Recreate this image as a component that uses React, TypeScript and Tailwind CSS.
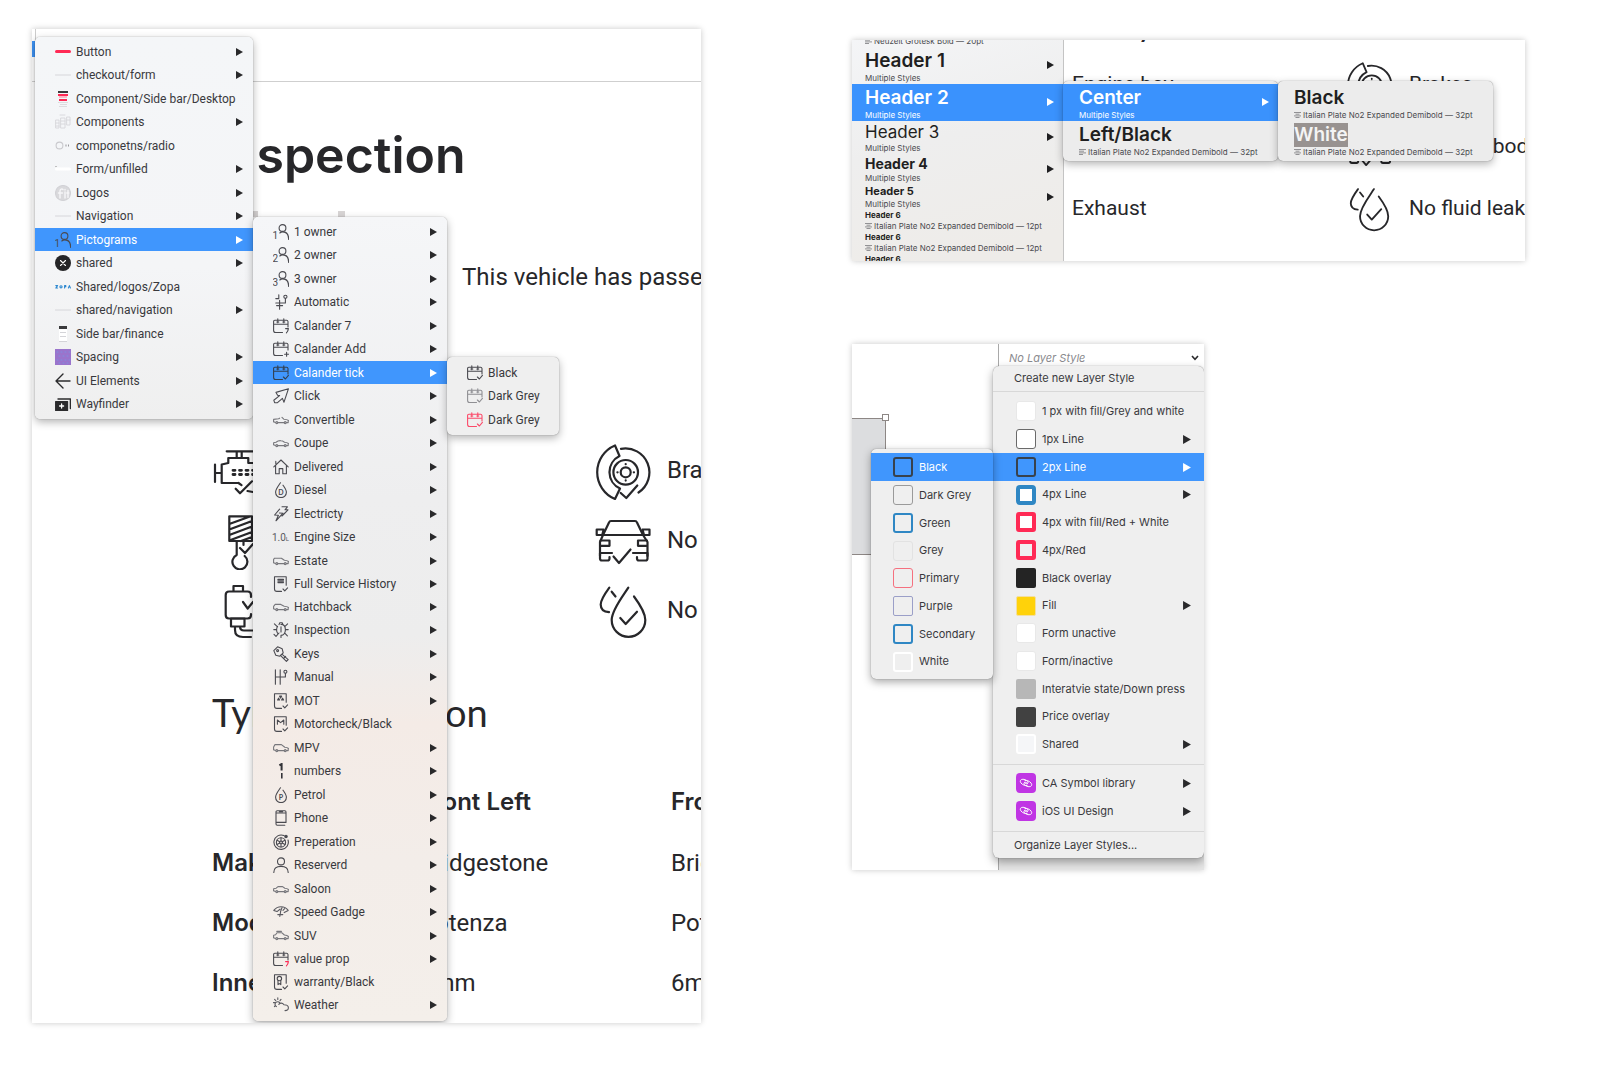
import React from "react";
import type { ReactNode } from "react";

const RED = "#ff2a55";

type Item = {
  label: string;
  icon?: ReactNode;
  arrow?: boolean;
  active?: boolean;
  sub?: ReactNode;
};

/* ---------- small 16px pictograms ---------- */

function Glyph({ children, color = "#4a4a50" }: { children: ReactNode; color?: string }) {
  return (
    <svg
      aria-hidden="true"
      viewBox="0 0 16 16"
      className="size-4 shrink-0"
      fill="none"
      stroke={color}
      strokeWidth="1.1"
      strokeLinecap="round"
      strokeLinejoin="round"
    >
      {children}
    </svg>
  );
}

function Owner({ n }: { n: string }) {
  return (
    <Glyph>
      <circle cx="9.5" cy="4" r="3.4" />
      <path d="M6.800 9C7.600 8.300 8.600 7.900 9.800 7.900c3.700 0 5.900 2.600 5.900 7.500" />
      <text x="-0.5" y="15" fontSize="10" fontFamily="Roboto, sans-serif" fill="#4a4a50" stroke="none">
        {n}
      </text>
    </Glyph>
  );
}

function Calendar({ mark, color, markColor }: { mark: "7" | "+" | "tick"; color?: string; markColor?: string }) {
  return (
    <Glyph color={color}>
      <path d="M9.500 14.500H2.600a2 2 0 0 1-2-2V3.500a1.200 1.200 0 0 1 1.200-1.200h11.800a1.400 1.400 0 0 1 1.400 1.200V9M.6 6.200H15M4.800.8v4M10.800.8v4M3.800 4h2M9.800 4h2" />
      {mark === "7" && <path stroke={markColor} d="M12.600 10.600h2.800c-.2 2-.8 3-2 4.200" />}
      {mark === "+" && <path d="M13.600 11.200v4M11.600 13.200h4" />}
      {mark === "tick" && <path d="M10.400 12l2 2 3-3.600" />}
    </Glyph>
  );
}

function Car({ roof }: { roof: string }) {
  return (
    <Glyph color="#77777c">
      <path d={roof} />
      <path d="M5 10.600h6M.6 9.800l1.800.8M13.400 10.600h1.800V8.600" />
      <circle cx="3.800" cy="10.600" r="1" />
      <circle cx="12.200" cy="10.600" r="1" />
    </Glyph>
  );
}

function Drop({ letter }: { letter: string }) {
  return (
    <Glyph>
      <path d="M7.500.8C5 4.500 2.600 7.200 2.600 10.200a5.300 5.300 0 0 0 10.800 0c0-2.300-1.600-4.400-3.400-7" />
      <text x="8" y="12.800" textAnchor="middle" fontSize="7" fontWeight="700" fontFamily="Lato, sans-serif" fill="#4a4a50" stroke="none">
        {letter}
      </text>
    </Glyph>
  );
}

function Sheet({ children }: { children: ReactNode }) {
  return (
    <Glyph>
      <path d="M8.500 15.400H4a2.500 2.500 0 0 1-2.500-2.500V.7h11.700v8.600M10 13l1.800 1.800 2.800-3" />
      {children}
    </Glyph>
  );
}

const hair = (
  <Glyph color="#d6d6da">
    <path d="M.5 8h15" strokeWidth="1" />
  </Glyph>
);

/* ---------- menu parts ---------- */

function Arrow({ big }: { big?: boolean }) {
  return (
    <svg aria-hidden="true" viewBox="0 0 7 8" className={big ? "ml-auto h-[9px] w-2 shrink-0" : "ml-auto h-2 w-[7px] shrink-0"}>
      <path d="M0 0l7 4-7 4z" fill="currentColor" />
    </svg>
  );
}

function Menu({ items, label, className }: { items: Item[]; label: string; className: string }) {
  return (
    <ul
      role="menu"
      aria-label={label}
      className={"absolute z-10 rounded-[5px] shadow-[0_3px_8px_rgba(0,0,0,0.3),0_0_1px_rgba(0,0,0,0.5)] " + className}
    >
      {items.map((it, i) => (
        <li key={i} role="none" className="relative h-[23px] even:h-6 nth-[16n]:h-[23px]">
          <button
            role="menuitem"
            className={
              "flex h-full w-full items-center gap-[5px] pr-[10px] pl-5 text-left font-['Roboto'] text-[12px] whitespace-nowrap " +
              (it.active ? "bg-[#4096fd] text-white" : "text-[#39393d]")
            }
          >
            {it.icon}
            {it.label}
            {it.arrow && (
              <span className={it.active ? "ml-auto text-white" : "ml-auto text-[#29292b]"}>
                <Arrow />
              </span>
            )}
          </button>
          {it.sub}
        </li>
      ))}
    </ul>
  );
}

const tickItems: Item[] = [
  { label: "Black", icon: <Calendar mark="tick" /> },
  { label: "Dark Grey", icon: <Calendar mark="tick" color="#8f8f93" /> },
  { label: "Dark Grey", icon: <Calendar mark="tick" color="#fb4a69" /> },
];

const pictograms: Item[] = [
  { label: "1 owner", icon: <Owner n="1" />, arrow: true },
  { label: "2 owner", icon: <Owner n="2" />, arrow: true },
  { label: "3 owner", icon: <Owner n="3" />, arrow: true },
  {
    label: "Automatic",
    icon: (
      <Glyph>
        <path d="M5.800.8v3.600M2.800 4.600h3M2.800 9h9.600V4.600M6.600 6.400v8.800M3.600 11.600h6" />
        <circle cx="12.400" cy="2.800" r="1.600" />
      </Glyph>
    ),
    arrow: true,
  },
  { label: "Calander 7", icon: <Calendar mark="7" />, arrow: true },
  { label: "Calander Add", icon: <Calendar mark="+" />, arrow: true },
  {
    label: "Calander tick",
    icon: <Calendar mark="tick" color="#33404f" />,
    arrow: true,
    active: true,
    sub: <Menu label="Calander tick" items={tickItems} className="-top-1 left-full w-28 bg-[#efefef] py-1" />,
  },
  {
    label: "Click",
    icon: (
      <Glyph>
        <path d="M15.400.8L3 4.400l1.600 2.800 2 .4L.8 12.200l.8 2.400 2.600.2 5.200-4.400 1.600 3.800z" />
      </Glyph>
    ),
    arrow: true,
  },
  { label: "Convertible", icon: <Car roof="M.6 9.800V7.400l5-.6 1-.6M9 5.400l1.800 1.800c2 .1 3.600.4 4.600 1.200" />, arrow: true },
  { label: "Coupe", icon: <Car roof="M.6 9.600V7.800l2.400-.6c1.600-1.300 3-1.700 4.700-1.600 1.400 0 2.800.8 3.800 1.600 1.800.1 3 .5 3.800 1.200" />, arrow: true },
  {
    label: "Delivered",
    icon: (
      <Glyph>
        <path d="M.8 7.800L8 1l7.200 6.800M2.600 6.400v8.400h3.600V9.600h3.600v5.200h3.600V6.400M2.800 4.600V2.400" />
      </Glyph>
    ),
    arrow: true,
  },
  { label: "Diesel", icon: <Drop letter="D" />, arrow: true },
  {
    label: "Electricty",
    icon: (
      <Glyph>
        <path d="M6.600 3.200L1.600 9l3.800.2L3 14.800l7-7.600-3.600-.2M9 .8h5.400l-2.400 3h3L9 10" />
      </Glyph>
    ),
    arrow: true,
  },
  {
    label: "Engine Size",
    icon: (
      <svg aria-hidden="true" viewBox="0 0 16 16" className="size-4 shrink-0 overflow-visible">
        <text x="-1" y="12" fontSize="10" fontFamily="Roboto, sans-serif" fill="#5a5a60">
          1.0
        </text>
        <text x="12.800" y="12" fontSize="6" fontFamily="Roboto, sans-serif" fill="#5a5a60">
          L
        </text>
      </svg>
    ),
    arrow: true,
  },
  { label: "Estate", icon: <Car roof="M.6 9.600V6.400l1-1.200h6.800l3 2c2 .1 3.200.5 4 1.200" />, arrow: true },
  {
    label: "Full Service History",
    icon: (
      <Sheet>
        <path d="M5 3.400h5.400M5 5h5.400M5 6.600h5.400" strokeWidth="1.400" />
      </Sheet>
    ),
    arrow: true,
  },
  { label: "Hatchback", icon: <Car roof="M.6 9.600V7.400l1.600-2h5.600l3.400 1.800c2 .1 3.400.5 4.200 1.200" />, arrow: true },
  {
    label: "Inspection",
    icon: (
      <Glyph>
        <path d="M8 2.400c3 0 4.400 2.400 4.400 5.400s-1.600 5.600-4.400 5.600M4.600 4.400C3.800 5.400 3.600 6.600 3.600 8s.4 2.200 1 3.200M8 4.800V10M6 2.600L6.800.8h2.400L10 2.600M3.600 7.600H.8M12.400 7.600h2.800M12 4.400l2.600-2.600M4 4.400L1.400 1.800M12 11.400l2.400 2.400M1 12.400l2 2 3-3.400M8 13.400v2" />
      </Glyph>
    ),
    arrow: true,
  },
  {
    label: "Keys",
    icon: (
      <Glyph>
        <path d="M.8 4.600L4.600.8l4.600 2 1 4-3.400 3.400-4-1zM9.200 8.400l6 5.200-1.800 1.800-6-6M11 12l1.600-1.600" />
        <circle cx="4.600" cy="4.600" r="1" />
      </Glyph>
    ),
    arrow: true,
  },
  {
    label: "Manual",
    icon: (
      <Glyph>
        <path d="M2.400.8v14.400M7.200.8v14.400M2.400 8h10V4.400" />
        <circle cx="12.400" cy="2.800" r="1.500" />
      </Glyph>
    ),
    arrow: true,
  },
  {
    label: "MOT",
    icon: (
      <Sheet>
        <path d="M6.600 3.200h2L7.600 5zM4.600 7h2l-1-1.800zM8.600 7h2l-1-1.800z" strokeWidth="1.200" />
      </Sheet>
    ),
    arrow: true,
  },
  {
    label: "Motorcheck/Black",
    icon: (
      <Sheet>
        <path d="M4.400 8.200V4l3.200 2.600L10.800 4v4.200" />
      </Sheet>
    ),
  },
  { label: "MPV", icon: <Car roof="M.6 9.600V7l1.400-2.400h6.400l3.400 2.600c1.800.1 3 .5 3.600 1.200" />, arrow: true },
  {
    label: "numbers",
    icon: (
      <svg aria-hidden="true" viewBox="0 0 16 16" className="size-4 shrink-0" fill="none" stroke="#333338">
        <path d="M6.400 2.400L8.600 1v6.400" strokeWidth="2" />
        <path d="M8.800 10v5.600" strokeWidth="1.600" />
      </svg>
    ),
    arrow: true,
  },
  { label: "Petrol", icon: <Drop letter="P" />, arrow: true },
  {
    label: "Phone",
    icon: (
      <Glyph>
        <path d="M3 12.400V2a1.200 1.200 0 0 1 1.200-1.200h7.600A1.200 1.200 0 0 1 13 2v10.400zM3 3h10M6.400 1.800h3.200M3 12.400v1.600a1.200 1.200 0 0 0 1.200 1.200h7.600" />
      </Glyph>
    ),
    arrow: true,
  },
  {
    label: "Preperation",
    icon: (
      <Glyph>
        <path d="M11 1.600A7.200 7.200 0 1 0 15 6" />
        <circle cx="8" cy="8.400" r="4.600" />
        <circle cx="8" cy="8.400" r="1.400" />
        <path d="M8 3.800V7M8 9.800V13M4 6.200l2.800 1.500M12 6.200L9.200 7.700M4 10.600l2.800-1.500M12 10.600L9.200 9.100" />
        <circle cx="13" cy="2.400" r="1.200" fill="#4a4a50" />
      </Glyph>
    ),
    arrow: true,
  },
  {
    label: "Reserverd",
    icon: (
      <Glyph>
        <circle cx="8" cy="4.400" r="3.500" />
        <path d="M.8 15.400c0-4 2.800-6 7.200-6s7.200 2 7.200 6" />
      </Glyph>
    ),
    arrow: true,
  },
  { label: "Saloon", icon: <Car roof="M.6 9.600V7.800l2.600-.6L5 5.600h4.600l2.200 1.600c1.600.1 2.800.5 3.600 1.200" />, arrow: true },
  {
    label: "Speed Gadge",
    icon: (
      <Glyph color="#5a5a60">
        <path d="M.8 6.400C3 3.600 5.600 2.800 8 2.800s5.400 1 7.200 3.600l-4 2.200M.8 6.400L4 7.600l3-2.400M9.200 3L7.400 8M4.800 10.600h5M7.600 8l-.8 4.400M10 6.400l1.600-1.800" />
      </Glyph>
    ),
    arrow: true,
  },
  { label: "SUV", icon: <Car roof="M.6 9.600V7.200l2-.4L4 4.800h5l2.400 2.200c1.800.1 3.200.5 4 1.400M3.800 3.400h4.600" />, arrow: true },
  { label: "value prop", icon: <Calendar mark="7" markColor={RED} />, arrow: true },
  {
    label: "warranty/Black",
    icon: (
      <Sheet>
        <circle cx="6.400" cy="4.600" r="2.200" />
        <path d="M5 6.600v4l1.400-1 1.400 1v-4" />
      </Sheet>
    ),
  },
  {
    label: "Weather",
    icon: (
      <Glyph color="#5a5a60">
        <path d="M7 6.200a2.600 2.600 0 1 0-3.600 3.400M4.800.8v1.600M.4 5.600H2M1.600 2.400l1.200 1.200M8 2.400L7 3.600M1.400 9.600l1-1.200M5.800 7.400c1-1.600 3.600-2 5.200.4 2.400 0 4.400 1 4.400 3s-1.200 2.800-3.400 2.800" />
      </Glyph>
    ),
    arrow: true,
  },
];

const symbols: Item[] = [
  { label: "Button", icon: <Glyph color={RED}><path d="M1.500 7.500h13" strokeWidth="3" /></Glyph>, arrow: true },
  { label: "checkout/form", icon: hair, arrow: true },
  {
    label: "Component/Side bar/Desktop",
    icon: (
      <Glyph>
        <g stroke="none">
          <path fill="#3a3a3c" d="M3 0h10v2H3z" />
          <path fill={RED} d="M3 3h10v2H3zM4 8h8v2H4z" />
          <path fill="#fbb9c5" d="M4 5h8v2H4z" />
          <path fill="#dcdcdf" d="M3 11h10v1H3zM5 13h7v1H5zM4 15h8v1H4z" />
        </g>
      </Glyph>
    ),
  },
  {
    label: "Components",
    icon: (
      <Glyph color="#d6d6da">
        <path d="M5 1h5M1 6h3v8H1zM6 4h4v10H6zM12 3h3v8h-3zM1 9h3M1 12h3M6 7h4M6 10h4M12 6h3" strokeWidth="0.9" />
      </Glyph>
    ),
    arrow: true,
  },
  {
    label: "componetns/radio",
    icon: (
      <Glyph color="#c9c9cd">
        <circle cx="4.500" cy="7.500" r="3.400" />
        <path d="M10.500 7.500h4" strokeWidth="2" strokeDasharray="1 1.500" strokeLinecap="butt" stroke="#98989c" />
      </Glyph>
    ),
  },
  { label: "Form/unfilled", icon: <Glyph color="#ffffff"><path d="M1.500 8h13" strokeWidth="3" /><path d="M.5 5.500h1" stroke="#bbb" /></Glyph>, arrow: true },
  {
    label: "Logos",
    icon: (
      <Glyph color="#d2d2d6">
        <circle cx="8" cy="8" r="7.500" fill="#d9d9dc" />
        <path d="M5 13V6c0-2 2-2.500 3-1.500M3.500 8h4M10 7v6M10 4.500V5M13 5.500v7M11.800 8h2" stroke="#f6f6f8" strokeWidth="1.400" />
      </Glyph>
    ),
    arrow: true,
  },
  { label: "Navigation", icon: hair, arrow: true },
  {
    label: "Pictograms",
    icon: <Owner n="1" />,
    arrow: true,
    active: true,
    sub: (
      <Menu
        label="Pictograms"
        items={pictograms}
        className="-top-[11px] left-full w-[194px] bg-[linear-gradient(180deg,#f5f6f8_0%,#eeeeef_35%,#ededed_52%,#f4ebe6_63%,#f3ede9_80%,#f4efea_100%)] pt-[3px] pb-1"
      />
    ),
  },
  {
    label: "shared",
    icon: (
      <Glyph color="#ffffff">
        <circle cx="8" cy="8" r="8" fill="#252527" stroke="none" />
        <path d="M5.500 5.500l5 5M10.500 5.500l-5 5" />
      </Glyph>
    ),
    arrow: true,
  },
  {
    label: "Shared/logos/Zopa",
    icon: (
      <Glyph color="#2d88d0">
        <path d="M.8 6.600h1.800L.8 9h1.800M9.600 9V6.600h1.200v1.200H9.600M13.400 9l1-2.400 1 2.400" />
        <circle cx="6" cy="7.800" r="1.100" />
      </Glyph>
    ),
  },
  { label: "shared/navigation", icon: hair, arrow: true },
  {
    label: "Side bar/finance",
    icon: (
      <Glyph>
        <g stroke="none">
          <path fill="#ffffff" d="M4 3h8v13H4z" />
          <path fill="#3a3a3c" d="M4 0h8v3H4z" />
          <path fill="#d4d4d8" d="M5 6h6v1H5zM5 10h6v1H5zM4 15h8v1H4z" />
        </g>
      </Glyph>
    ),
  },
  {
    label: "Spacing",
    icon: (
      <Glyph>
        <path fill="#9a74cc" stroke="none" d="M0 0h16v16H0z" />
        <path stroke="#7f8fe0" strokeWidth="1" strokeDasharray="1 3" d="M2 3h13M4 7h11M2 11h13M4 14h11" />
      </Glyph>
    ),
    arrow: true,
  },
  { label: "UI Elements", icon: <Glyph color="#2b2b2d"><path d="M15 8H1M8 1L1 8l7 7" strokeWidth="1.400" /></Glyph>, arrow: true },
  {
    label: "Wayfinder",
    icon: (
      <Glyph color="#2b2b2d">
        <path fill="#2b2b2d" d="M.6 5.600h12v8.800H.6z" />
        <path d="M3 3h12.400v9.600" strokeWidth="1.400" />
        <path stroke="#fff" d="M6.600 8v4M4.600 10h4" strokeWidth="1.300" />
      </Glyph>
    ),
    arrow: true,
  },
];

/* ---------- large inspection pictograms ---------- */

function Picto({ children, small }: { children: ReactNode; small?: boolean }) {
  return (
    <svg
      aria-hidden="true"
      viewBox="0 0 56 56"
      className={small ? "size-[47px] shrink-0" : "size-14 shrink-0"}
      fill="none"
      stroke="#27272a"
      strokeWidth="2.200"
      strokeLinecap="round"
      strokeLinejoin="round"
    >
      {children}
    </svg>
  );
}

const brakes = (
  <>
    <path d="M20 1.500L24.500 12A18 18 0 0 0 25 44.500L20 55A29 29 0 0 1 20 1.500Z" />
    <path d="M26 4.800A24 24 0 0 1 43.500 48.500" />
    <circle cx="30.700" cy="28.300" r="12.300" />
    <circle cx="30.700" cy="28.300" r="5" />
    <path d="M30.700 20v.2M30.700 36.400v.2M22.400 28.300h.2M38.800 28.300h.2" />
    <path d="M25.700 49l5.600 5 11-12.500" />
  </>
);
const car = (
  <>
    <path d="M8 21l6-12.500q.5-1.500 2-1.500h24q1.500 0 2 1.500L48 21M8 21h40M8 21l-3 7v14M48 21l4.500 7v14" />
    <path d="M1.700 15.500h7l-1.500 5.500H1.700zM47.500 15.500h7V21h-5.500z" />
    <path d="M5.500 26.500h9v5.300h-9M52 26.500h-9v5.300h9" />
    <path d="M5 39h12M5 39v5.500q0 2 2 2h5.500q2 0 2-2V43M52.500 39H38M52.500 39v5.500q0 2-2 2H44q-2 0-2-2V43" />
    <path d="M18.500 42.500l5.500 6.500 11.500-13.500" />
  </>
);
const drops = (
  <>
    <path d="M33.300 3.700C28 12 16.700 26 16.700 36a16.800 16.800 0 0 0 33.600 0c0-6-5-15-11.300-23.500" />
    <path d="M14.300 3.700C9 11 5.700 16 5.700 20.500c0 4.500 3.300 7.300 8.300 7.700M16.700 7.700l3.800 4.800" />
    <path d="M25.300 34l5.400 6L42 27.700" />
  </>
);
const engine = (
  <>
    <path d="M2 20.500V38M2 29h6.700M25.500 39H8.700V20.500l6.600-1.500V14h20v5H44M13.700 7.300h28M23.700 8v6M28.700 8v6M22.700 44.700l4.300 4.600 12-12M25.500 39l3 2.200M34.500 47l8 1.500" />
    <path d="M20 26.300h20M20 30.500h20" strokeDasharray="2 4.500" strokeWidth="2.800" />
  </>
);
const piston = (
  <>
    <path d="M16.300 2.300H39V27H16.300zM16.300 10L37 2.500M16.300 15.500L39 7M16.300 21L39 12.500M16.300 26.500L39 18M28 27l11-4" />
    <path d="M23.700 28v13a7.500 7.500 0 1 0 8 1M30.500 28v3M27 34l5 5 8-9" />
  </>
);
const gearbox = (
  <>
    <path d="M20.500 7.500V2h9.500v5.500M38 13v-2q0-3.500-3.500-3.500H16q-3.300 0-3.300 3.500v20q0 3.500 3.300 3.500h18.500q3.500 0 3.500-3.500v-1" />
    <path d="M18 34.500h13.500v8H18zM22 42.500V46q0 7 8 7h8M27 42.500q0 4 4 4h9M30 18l4.700 6.500L40 18" />
  </>
);

/* ---------- boards ---------- */

const board = "relative overflow-hidden bg-white shadow-[0_0_6px_rgba(0,0,0,0.22)] ";

function InspectionBoard() {
  const tyreRows = [
    ["Make", "Bridgestone", "Bridgestone"],
    ["Model", "Potenza", "Potenza"],
    ["Inner", "6mm", "6mm"],
  ];
  const checks: [ReactNode, ReactNode, string][] = [
    [engine, brakes, "Brakes"],
    [piston, car, "No rusty bodywork"],
    [gearbox, drops, "No fluid leaks"],
  ];
  return (
    <section className={board + "whitespace-nowrap text-[#27272a]"}>
      <div className="h-[53px] border-b border-[#cfcfcf]">
        <div className="h-full w-1 border-r border-[#cccccc] pt-3">
          <div className="h-4 w-[3px] bg-[#3d93f5]" />
        </div>
      </div>
      <div className="pb-[10px] pl-[180px]">
        <h1 className="mt-10 h-[66px] text-[50px] leading-[66px] font-semibold">Inspection</h1>
        <div className="mt-[23px] flex gap-20 pl-10">
          <span className="h-[6px] w-[6px] bg-[#d8d5d5]" />
          <span className="h-[6px] w-[7px] bg-[#d8d5d5]" />
        </div>
        <p className="mt-11 pl-[250px] font-['Roboto'] text-2xl">This vehicle has passed</p>
        <ul className="mt-36 pl-px font-['Roboto'] text-2xl">
          {checks.map(([left, right, text], i) => (
            <li key={i} className="grid h-[70px] grid-cols-[382px_72px_1fr] items-center">
              <Picto>{left}</Picto>
              <Picto>{right}</Picto>
              <span className="pb-[5px]">{text}</span>
            </li>
          ))}
        </ul>
        <h2 className="mt-[42px] font-['Lato'] text-[38px] leading-[46px]">Tyre information</h2>
        <table className="mt-[35px] w-full table-fixed text-left text-2xl">
          <colgroup>
            <col className="w-[208px]" />
            <col className="w-[251px]" />
            <col />
          </colgroup>
          <thead>
            <tr className="h-[63px]">
              <td />
              <th className="font-semibold">Front Left</th>
              <th className="font-semibold">Front Right</th>
            </tr>
          </thead>
          <tbody>
            {tyreRows.map(([name, a, b]) => (
              <tr key={name} className="h-[60px] font-['Roboto']">
                <th className="font-['Inter'] text-2xl font-semibold">{name}</th>
                <td>{a}</td>
                <td>{b}</td>
              </tr>
            ))}
          </tbody>
        </table>
      </div>
      <Menu
        label="Symbols"
        items={symbols}
        className="top-2 left-[3px] w-[218px] bg-[linear-gradient(180deg,#f4f6f8,#f4f5f7_60%,#efefef)] pt-[3px] pb-1"
      />
    </section>
  );
}

function AlignMark({ center }: { center?: boolean }) {
  return (
    <svg aria-hidden="true" viewBox="0 0 7 6" className="h-[6px] w-[7px] shrink-0" stroke="#7a7a7e" strokeWidth="0.8">
      <path d={center ? "M0 .5h7M1.500 2.200h4M0 3.900h7M1.500 5.500h4" : "M0 .5h7M0 2.200h5M0 3.900h7M0 5.500h4"} />
    </svg>
  );
}

type StyleItem = { name: string; note: string; size: string; mark?: "left" | "center"; arrow?: boolean; active?: boolean; selected?: boolean };

function StyleRow({ item }: { item: StyleItem }) {
  return (
    <button
      role="menuitem"
      className={
        "flex w-full items-center pr-[9px] pb-px text-left whitespace-nowrap " +
        (item.active ? "bg-[#3a92fd] text-white" : "text-[#1f1f21]")
      }
    >
      <span>
        <span className={"block " + item.size}>
          <span className={item.selected ? "inline-block bg-[#989290] text-[#f4f4f4]" : ""}>{item.name}</span>
        </span>
        <span className={"flex items-center gap-[2px] text-[8px] leading-[10px] " + (item.active ? "text-white" : "text-[#4a4a4e]")}>
          {item.mark && <AlignMark center={item.mark === "center"} />}
          {item.note}
        </span>
      </span>
      {item.arrow && <Arrow />}
    </button>
  );
}

const big = "pt-0.5 text-[19px] leading-6 font-semibold";
const tiny = "text-[8px] leading-[11px] font-bold";
const plate = (pt: number) => `Italian Plate No2 Expanded Demibold — ${pt}pt`;
const ms = "Multiple Styles";

const headers: StyleItem[] = [
  { name: "Header 1", note: ms, size: big, arrow: true },
  { name: "Header 2", note: ms, size: big, arrow: true, active: true },
  { name: "Header 3", note: ms, size: "text-[17px] leading-[22px]", arrow: true },
  { name: "Header 4", note: ms, size: "text-[14px] leading-[19px] font-bold", arrow: true },
  { name: "Header 5", note: ms, size: "text-[11px] leading-[15px] font-bold", arrow: true },
  { name: "Header 6", note: plate(12), size: tiny, mark: "center" },
  { name: "Header 6", note: plate(12), size: tiny, mark: "center" },
  { name: "Header 6", note: plate(12), size: tiny, mark: "center" },
];

function HeaderBoard() {
  const rows: [string, ReactNode, string][] = [
    ["Engine bay", brakes, "Brakes"],
    ["Gearbox", car, "No rusty bodywork"],
    ["Exhaust", drops, "No fluid leaks"],
  ];
  const pop =
    "absolute top-[41px] rounded-[5px] bg-[#ececec] py-[3px] shadow-[0_3px_8px_rgba(0,0,0,0.3),0_0_1px_rgba(0,0,0,0.5)] ";
  return (
    <section className={board + "flex h-[221px] items-start"}>
      <div role="menu" aria-label="Text styles" className="-mt-[19px] w-[212px] shrink-0 border-r border-[#c4c4c4] bg-[linear-gradient(165deg,#f5f6f8,#eeeeee_45%,#eeece9_85%)] *:pl-[13px]">
        <StyleRow item={{ name: "Header", note: "Neuzeit Grotesk Bold — 20pt", size: "text-[12px] leading-[15px]", mark: "left" }} />
        {headers.map((h, i) => (
          <StyleRow key={i} item={h} />
        ))}
      </div>
      <div className="min-w-0 flex-1 pl-2 font-['Roboto'] text-[21px] whitespace-nowrap text-[#27272a]">
        <h2 className="-mt-[27px] mb-[9px] font-['Lato'] text-2xl leading-8 font-bold">History</h2>
        {rows.map(([a, icon, b]) => (
          <div key={a} className="grid h-[62px] grid-cols-[274px_63px_1fr] items-center">
            <span>{a}</span>
            <Picto small>{icon}</Picto>
            <span>{b}</span>
          </div>
        ))}
      </div>
      <div role="menu" aria-label="Header 2" className={pop + "left-[211px] w-[215px] *:pl-4"}>
        <StyleRow item={{ name: "Center", note: ms, size: big, arrow: true, active: true }} />
        <StyleRow item={{ name: "Left/Black", note: plate(32), size: big, mark: "left" }} />
      </div>
      <div role="menu" aria-label="Center" className={pop + "left-[426px] w-[215px] *:pl-4"}>
        <StyleRow item={{ name: "Black", note: plate(32), size: big, mark: "center" }} />
        <StyleRow item={{ name: "White", note: plate(32), size: big, mark: "center", selected: true }} />
      </div>
    </section>
  );
}

type Swatch = { label: string; box: string; arrow?: boolean; active?: boolean; link?: boolean };

const lines: Swatch[] = [
  { label: "Black", box: "border-2 border-[#38424d] rounded-[3px]", active: true },
  { label: "Dark Grey", box: "border border-[#9a9a9a] rounded-[3px]" },
  { label: "Green", box: "border-2 border-[#2f87c4] rounded-[3px]" },
  { label: "Grey", box: "border border-[#e2e2e2] rounded-[3px]" },
  { label: "Primary", box: "border border-[#f5707f] rounded-[3px]" },
  { label: "Purple", box: "border border-[#9b9fc8] rounded-[2px]" },
  { label: "Secondary", box: "border-2 border-[#2f87c4] rounded-[3px]" },
  { label: "White", box: "border-2 border-white rounded-[3px]" },
];

const layerStyles: Swatch[] = [
  { label: "1 px with fill/Grey and white", box: "border border-[#e8e8e8] bg-white rounded-[3px]" },
  { label: "1px Line", box: "border border-[#6a6a6a] bg-white rounded-[3px]", arrow: true },
  { label: "2px Line", box: "border-2 border-[#38424d] rounded-[3px]", arrow: true, active: true },
  { label: "4px Line", box: "border-4 border-[#2f87c4] bg-white rounded-[4px]", arrow: true },
  { label: "4px with fill/Red + White", box: "border-4 border-[#ff2a55] bg-white rounded-[3px]" },
  { label: "4px/Red", box: "border-4 border-[#ff2a55] rounded-[3px]" },
  { label: "Black overlay", box: "bg-[#242424] rounded-[2px]" },
  { label: "Fill", box: "bg-[#ffd20a] border border-[#f3dfa0] rounded-[2px]", arrow: true },
  { label: "Form unactive", box: "border border-[#e8e8e8] bg-white rounded-[3px]" },
  { label: "Form/inactive", box: "border border-[#e8e8e8] bg-white rounded-[3px]" },
  { label: "Interatvie state/Down press", box: "bg-[#b7b7b7] rounded-[2px]" },
  { label: "Price overlay", box: "bg-[#414141] rounded-[2px]" },
  { label: "Shared", box: "border-2 border-white bg-[#f5f6f8] rounded-[3px]", arrow: true },
];

const libraries: Swatch[] = [
  { label: "CA Symbol library", box: "bg-[#c035e4] rounded-[4px]", arrow: true, link: true },
  { label: "iOS UI Design", box: "bg-[#c035e4] rounded-[4px]", arrow: true, link: true },
];

function SwatchList({ items, label }: { items: Swatch[]; label: string }) {
  return (
    <ul role="menu" aria-label={label}>
      {items.map((s) => (
        <li key={s.label} role="none" className="relative h-7 nth-[4n]:h-[27px]">
          <button
            role="menuitem"
            className={
              "flex h-full w-full items-center pr-[13px] pl-[23px] text-left text-[11px] whitespace-nowrap " +
              (s.active ? "bg-[#4096fd] text-white" : "text-[#39393d]")
            }
          >
            <span className={"mr-[6px] flex size-5 shrink-0 items-center justify-center " + s.box}>
              {s.link && (
                <svg aria-hidden="true" viewBox="0 0 14 12" className="h-3 w-[14px]" fill="none" stroke="#fff" strokeWidth="1">
                  <path d="M8.500 8.300C6.500 9 3.500 8 2 6S1.500 2.300 4 2.300c2.500 0 5.500 2 5 3.700-.4 1.200-2.400.8-3.600-.4" />
                  <path d="M5.500 3.700C7.500 3 10.500 4 12 6s.5 3.700-2 3.700c-2.500 0-5.500-2-5-3.700.4-1.200 2.400-.8 3.600.4" />
                </svg>
              )}
            </span>
            {s.label}
            {s.arrow && (
              <span className={s.active ? "ml-auto text-white" : "ml-auto text-[#29292b]"}>
                <Arrow big />
              </span>
            )}
          </button>
          {s.label === "2px Line" && (
            <div className="absolute -top-1 right-full w-[122px] rounded-[5px] bg-[#efefef] py-1 shadow-[0_3px_8px_rgba(0,0,0,0.35),0_0_1px_rgba(0,0,0,0.5)] [&_button]:pl-[22px]">
              <SwatchList items={lines} label="2px Line" />
            </div>
          )}
        </li>
      ))}
    </ul>
  );
}

function LayerStyleBoard() {
  return (
    <section className={board + "flex h-[526px] w-[352px]"}>
      <div className="w-[146px] pt-[74px]">
        <div className="relative h-[137px] w-[34px] border border-l-0 border-[#8d8785] bg-[#dcdddf]">
          <span className="absolute -top-[5px] -right-1 size-[7px] border border-[#8d8785] bg-white" />
        </div>
      </div>
      <div className="relative flex-1 border-l border-[#a9a9a9] bg-[#e6e6e6]">
        <label className="relative flex h-7 items-center bg-white">
          <span className="sr-only">Layer style</span>
          <select className="w-full appearance-none bg-transparent pl-[10px] text-[11px] text-[#8a8a8e] italic">
            <option>No Layer Style</option>
          </select>
          <svg aria-hidden="true" viewBox="0 0 8 6" className="absolute right-[5px] h-[6px] w-2" fill="none" stroke="#2b2b2d" strokeWidth="1.600">
            <path d="M1 1l3 3.400L7 1" />
          </svg>
        </label>
      </div>
      <div className="absolute top-[22px] right-0 w-[211px] rounded-[6px] bg-[#efefef] shadow-[0_4px_10px_rgba(0,0,0,0.35),0_0_1px_rgba(0,0,0,0.5)]">
        <button className="block h-[25px] w-full pl-[21px] text-left text-[11px] text-[#39393d]">Create new Layer Style</button>
        <hr className="mb-[5px] border-[#d8d8d8]" />
        <SwatchList items={layerStyles} label="Layer styles" />
        <hr className="mt-[6px] mb-1 border-[#d8d8d8]" />
        <SwatchList items={libraries} label="Libraries" />
        <hr className="mt-[6px] border-[#d8d8d8]" />
        <button className="block h-[26px] w-full pt-px pl-[21px] text-left text-[11px] text-[#39393d]">Organize Layer Styles...</button>
      </div>
    </section>
  );
}

export default function App() {
  return (
    <main className="grid min-h-screen grid-cols-[minmax(0,669fr)_minmax(0,673fr)] items-start gap-x-[151px] bg-white pt-[29px] pr-[95px] pb-14 pl-8 font-['Inter',sans-serif]">
      <InspectionBoard />
      <div className="flex flex-col items-start gap-[83px] pt-[11px] [&>*:first-child]:w-full">
        <HeaderBoard />
        <LayerStyleBoard />
      </div>
    </main>
  );
}
